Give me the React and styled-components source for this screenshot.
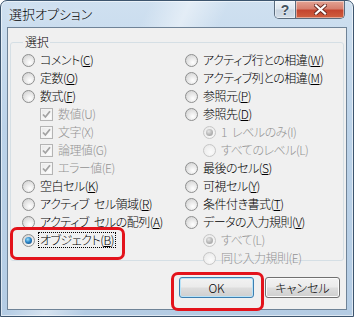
import React from "react";
import styled, { createGlobalStyle } from "styled-components";

const GlobalStyle = createGlobalStyle`
  html, body {
    margin: 0;
    padding: 0;
    background: #ffffff;
  }
  body {
    font-family: "Noto Sans CJK JP", "Noto Sans", sans-serif;
    font-feature-settings: "palt";
  }
`;

const Window = styled.div`
  position: relative;
  box-sizing: border-box;
  width: 354px;
  height: 317px;
  display: flex;
  flex-direction: column;
  border: 1px solid #3d556e;
  border-radius: 7px 7px 0 0;
  padding: 0 6px 6px 6px;
  background:
    linear-gradient(115deg, rgba(255,255,255,0) 30%, rgba(255,255,255,0.45) 38%, rgba(255,255,255,0) 46%),
    linear-gradient(180deg, #cfe0f0 0%, #bcd3e9 40%, #b4cce4 100%);
  box-shadow: inset 0 0 0 1px rgba(255,255,255,0.55);
`;

const TitleBar = styled.div`
  height: 26px;
  display: flex;
  align-items: flex-start;
  justify-content: space-between;
`;

const Title = styled.div`
  padding: 5px 0 0 2px;
  font-size: 13px;
  font-weight: 300;
  line-height: 16px;
  color: #000;
  text-shadow: 0 0 6px rgba(255,255,255,0.9);
`;

const Caption = styled.div`
  display: flex;
  margin-right: 2px;
  border: 1px solid #5a6b7d;
  border-top: none;
  border-radius: 0 0 5px 5px;
  overflow: hidden;
  height: 17px;
`;

const CapButton = styled.div`
  width: ${(p) => p.$w}px;
  height: 17px;
  display: flex;
  align-items: center;
  justify-content: center;
  box-shadow: inset 0 0 0 1px rgba(255,255,255,0.45);
  background: ${(p) =>
    p.$close
      ? "linear-gradient(180deg, #e3a394 0%, #d6806f 45%, #c4452f 55%, #d0603f 100%)"
      : "linear-gradient(180deg, #eef3f8 0%, #dde6ef 45%, #c8d4e0 55%, #d3dde8 100%)"};
  & + & {
    border-left: 1px solid #5a6b7d;
  }
`;

const HelpMark = styled.span`
  font-family: "Liberation Sans", sans-serif;
  font-weight: bold;
  font-size: 14px;
  line-height: 14px;
  color: #44525f;
  text-shadow: 0 0 2px #ffffff;
`;

const Client = styled.div`
  flex: 1;
  display: flex;
  flex-direction: column;
  border: 1px solid #6f8397;
  background: #f0f0f0;
`;

const Group = styled.fieldset`
  margin: 7px 2px 0 2px;
  padding: 2px 0 0 11px;
  height: 222px;
  border: 1px solid #d5dfe5;
  border-radius: 3px;
  min-width: 0;
`;

const GroupLabel = styled.legend`
  margin-left: 1px;
  padding: 0 2px;
  font-size: 12px;
  font-weight: 300;
  line-height: 14px;
  letter-spacing: -0.3px;
  color: #000;
`;

const Columns = styled.div`
  display: grid;
  grid-template-columns: 163px 1fr;
`;

const Column = styled.div`
  display: flex;
  flex-direction: column;
`;

const Row = styled.div`
  height: 18px;
  display: flex;
  align-items: center;
  gap: 3px;
  padding-left: ${(p) => (p.$indent ? 18 : 0)}px;
  font-size: 12px;
  font-weight: 300;
  line-height: 14px;
  letter-spacing: -0.5px;
  word-spacing: 3px;
  white-space: pre;
  color: ${(p) => (p.$disabled ? "#939393" : "#000")};
`;

const Radio = styled.span`
  position: relative;
  box-sizing: border-box;
  flex: none;
  width: 13px;
  height: 13px;
  border-radius: 50%;
  border: 1px solid ${(p) => (p.$disabled ? "#c6c6c6" : "#8e8f8f")};
  background: ${(p) =>
    p.$disabled
      ? "radial-gradient(circle at 60% 65%, #fbfbfb 0%, #f1f1f1 50%, #e4e4e4 100%)"
      : "radial-gradient(circle at 62% 68%, #ffffff 0%, #e8e8e8 45%, #cbcbcb 100%)"};
  &::after {
    content: "";
    display: ${(p) => (p.$checked ? "block" : "none")};
    position: absolute;
    left: 2px;
    top: 2px;
    width: 7px;
    height: 7px;
    border-radius: 50%;
    background: ${(p) =>
      p.$disabled
        ? "radial-gradient(circle at 40% 35%, #e6e6e6 0%, #b4b4b4 55%, #9c9c9c 100%)"
        : "radial-gradient(circle at 40% 35%, #9fe0fb 0%, #2c86c8 45%, #0c3d74 100%)"};
  }
`;

const CheckBox = styled.span`
  box-sizing: border-box;
  flex: none;
  width: 13px;
  height: 13px;
  display: flex;
  align-items: center;
  justify-content: center;
  border: 1px solid #b4b4b4;
  background: linear-gradient(135deg, #e8e8e8 0%, #f6f6f6 60%, #ffffff 100%);
  box-shadow: inset 0 0 0 1px #f4f4f4;
`;

const Label = styled.span`
  padding: 0 1px;
  border: 1px dotted ${(p) => (p.$focus ? "#000" : "transparent")};
  line-height: 14px;
`;

const ButtonRow = styled.div`
  display: flex;
  justify-content: flex-end;
  gap: 11px;
  margin: 16px 6px 0 0;
`;

const Button = styled.div`
  box-sizing: border-box;
  width: 75px;
  height: 21px;
  display: flex;
  align-items: center;
  justify-content: center;
  font-size: 12px;
  font-weight: 300;
  color: #000;
  border-radius: 3px;
  border: 1px solid ${(p) => (p.$default ? "#3c7fb1" : "#707070")};
  box-shadow: inset 0 0 0 1px ${(p) => (p.$default ? "#b9e3f8" : "#fbfbfb")};
  background: linear-gradient(180deg, #f2f2f2 0%, #ebebeb 48%, #dddddd 52%, #cfcfcf 100%);
`;

const Mark = styled.div`
  position: absolute;
  box-sizing: border-box;
  left: ${(p) => p.$x}px;
  top: ${(p) => p.$y}px;
  width: ${(p) => p.$w}px;
  height: ${(p) => p.$h}px;
  border: 3px solid #e3131b;
  border-radius: 7px;
  pointer-events: none;
`;

const leftItems = [
  { type: "radio", text: "コメント", key: "C" },
  { type: "radio", text: "定数", key: "O" },
  { type: "radio", text: "数式", key: "F" },
  { type: "check", text: "数値", key: "U", indent: true, disabled: true, checked: true },
  { type: "check", text: "文字", key: "X", indent: true, disabled: true, checked: true },
  { type: "check", text: "論理値", key: "G", indent: true, disabled: true, checked: true },
  { type: "check", text: "エラー値", key: "E", indent: true, disabled: true, checked: true },
  { type: "radio", text: "空白セル", key: "K" },
  { type: "radio", text: "アクティブ セル領域", key: "R" },
  { type: "radio", text: "アクティブ セルの配列", key: "A" },
  { type: "radio", text: "オブジェクト", key: "B", checked: true, focus: true },
];

const rightItems = [
  { type: "radio", text: "アクティブ行との相違", key: "W" },
  { type: "radio", text: "アクティブ列との相違", key: "M" },
  { type: "radio", text: "参照元", key: "P" },
  { type: "radio", text: "参照先", key: "D" },
  { type: "radio", text: "1 レベルのみ", key: "I", indent: true, disabled: true, checked: true },
  { type: "radio", text: "すべてのレベル", key: "L", indent: true, disabled: true },
  { type: "radio", text: "最後のセル", key: "S" },
  { type: "radio", text: "可視セル", key: "Y" },
  { type: "radio", text: "条件付き書式", key: "T" },
  { type: "radio", text: "データの入力規則", key: "V" },
  { type: "radio", text: "すべて", key: "L", indent: true, disabled: true, checked: true },
  { type: "radio", text: "同じ入力規則", key: "E", indent: true, disabled: true },
];

function Check() {
  return (
    <svg width="9" height="9" viewBox="0 0 9 9">
      <path d="M1 4.5 L3.4 7 L8 1.2" fill="none" stroke="#a3a3a3" strokeWidth="1.8" />
    </svg>
  );
}

function Option({ item }) {
  return (
    <Row $indent={item.indent} $disabled={item.disabled}>
      {item.type === "radio" ? (
        <Radio $checked={item.checked} $disabled={item.disabled} />
      ) : (
        <CheckBox>{item.checked && <Check />}</CheckBox>
      )}
      <Label $focus={item.focus}>
        {item.text}({item.disabled ? item.key : <u>{item.key}</u>})
      </Label>
    </Row>
  );
}

export default function App() {
  return (
    <>
      <GlobalStyle />
      <Window>
        <TitleBar>
          <Title>選択オプション</Title>
          <Caption>
            <CapButton $w={20}>
              <HelpMark>?</HelpMark>
            </CapButton>
            <CapButton $w={48} $close>
              <svg width="13" height="11" viewBox="0 0 13 11">
                <path d="M2 1.5 L11 9.5 M11 1.5 L2 9.5" stroke="#6b2a22" strokeWidth="4" strokeLinecap="square" />
                <path d="M2 1.5 L11 9.5 M11 1.5 L2 9.5" stroke="#ffffff" strokeWidth="2.2" strokeLinecap="square" />
              </svg>
            </CapButton>
          </Caption>
        </TitleBar>
        <Client>
          <Group>
            <GroupLabel>選択</GroupLabel>
            <Columns>
              <Column>
                {leftItems.map((it, i) => (
                  <Option key={i} item={it} />
                ))}
              </Column>
              <Column>
                {rightItems.map((it, i) => (
                  <Option key={i} item={it} />
                ))}
              </Column>
            </Columns>
          </Group>
          <ButtonRow>
            <Button $default>OK</Button>
            <Button>キャンセル</Button>
          </ButtonRow>
        </Client>
        <Mark $x={9} $y={226} $w={115} $h={33} />
        <Mark $x={170} $y={271} $w={93} $h={39} />
      </Window>
    </>
  );
}
